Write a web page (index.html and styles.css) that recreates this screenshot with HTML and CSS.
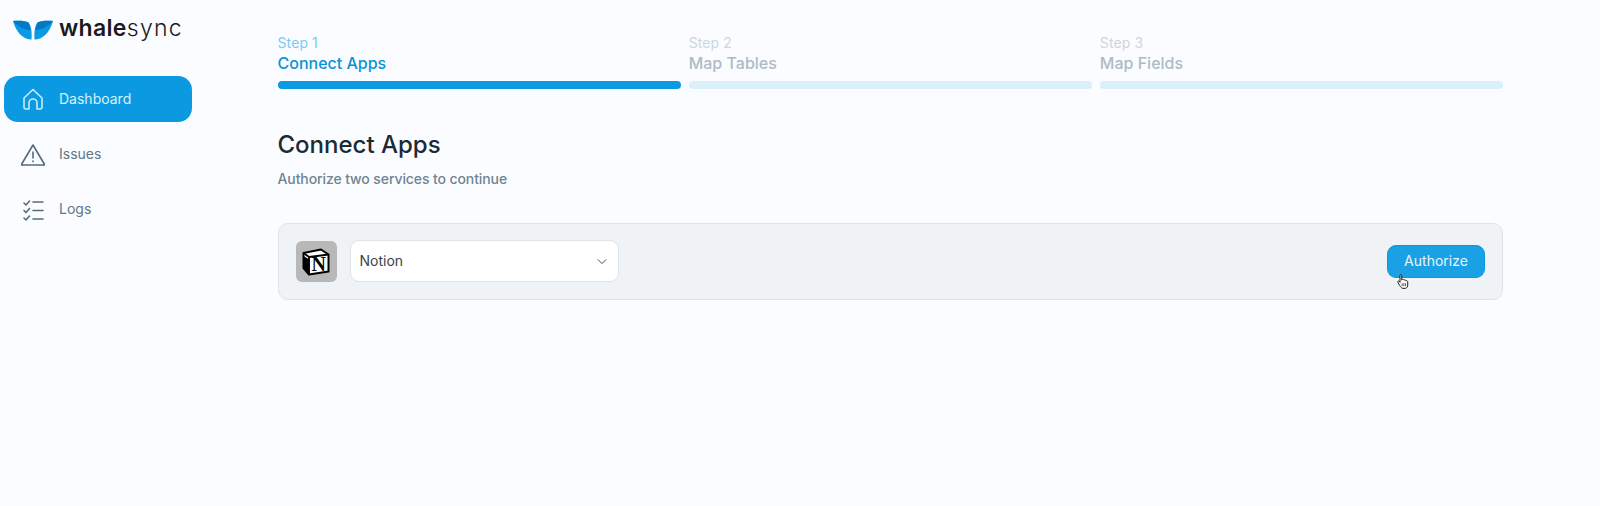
FILE: index.html
```html
<!DOCTYPE html>
<html lang="en">
<head>
<meta charset="utf-8">
<title>Whalesync</title>
<link rel="stylesheet" href="styles.css">
</head>
<body>
<div class="app">
  <aside class="sidebar">
    <div class="logo">
      <svg class="logo-mark" viewBox="0 0 40 20" width="40" height="20">
        <path d="M0 1 C5 0.5 12 0.5 15.5 2.5 C18.5 6 19 13 18.5 19.5 C10 19.5 3 12 0 1Z" fill="#0a9ae4"/>
        <path d="M0 1 C5 0.5 12 0.5 15.5 2.5 C16.5 5 17 7 17.5 10 C11 9.5 5 7 0 1Z" fill="#0578c4"/>
        <path d="M40 1 C35 0.5 28 0.5 24.5 2.5 C21.5 6 21 13 21.5 19.5 C30 19.5 37 12 40 1Z" fill="#0a9ae4"/>
        <path d="M40 1 C35 0.5 28 0.5 24.5 2.5 C23.5 5 23 7 22.5 10 C29 9.5 35 7 40 1Z" fill="#0578c4"/>
      </svg>
      <span class="logo-text"><b>whale</b>sync</span>
    </div>
    <nav class="nav">
      <a class="nav-item active">
        <svg class="nav-icon" viewBox="0 0 24 24" width="24" height="24"><path d="M3 11 L12 2.5 L21 11 V20 A2 2 0 0 1 19 22 H16 V16 A4 4 0 0 0 8 16 V22 H5 A2 2 0 0 1 3 20Z"/></svg>
        <span>Dashboard</span>
      </a>
      <a class="nav-item">
        <svg class="nav-icon" viewBox="0 0 24 24" width="24" height="24"><path d="M12 2 L23 20.5 A0.7 0.7 0 0 1 22.4 22 H1.6 A0.7 0.7 0 0 1 1 20.5Z"/><path d="M12 9 V15 M12 18 V18.6"/></svg>
        <span>Issues</span>
      </a>
      <a class="nav-item">
        <svg class="nav-icon" viewBox="0 0 24 24" width="24" height="24"><path d="M3 5 L5 7 L8.5 3 M3 12.5 L5 14.5 L8.5 10.5 M3 20 L5 22 L8.5 18 M12 4 H22 M12 12.5 H22 M12 21 H22"/></svg>
        <span>Logs</span>
      </a>
    </nav>
  </aside>
  <main class="main">
    <div class="steps">
      <div class="step current"><div class="step-num">Step 1</div><div class="step-name">Connect Apps</div><div class="step-bar"></div></div>
      <div class="step"><div class="step-num">Step 2</div><div class="step-name">Map Tables</div><div class="step-bar"></div></div>
      <div class="step"><div class="step-num">Step 3</div><div class="step-name">Map Fields</div><div class="step-bar"></div></div>
    </div>
    <h1 class="title">Connect Apps</h1>
    <p class="subtitle">Authorize two services to continue</p>
    <section class="card">
      <div class="app-icon">
        <svg viewBox="0 0 28 28" width="28" height="28">
          <path d="M1.5 5 L19 1.5 L26.5 6.5 V23.5 L7 26.5 L1.5 20Z" fill="#fff" stroke="#000" stroke-width="2" stroke-linejoin="round"/>
          <path d="M2 9 L7 12 V26 L2 20Z" fill="#000" stroke="#000" stroke-width="1.2" stroke-linejoin="round"/>
          <path d="M1.5 5 L7 9 L26.5 6.5 M7 9 V26.5" fill="none" stroke="#000" stroke-width="1.8" stroke-linejoin="round"/>
          <text x="16.8" y="23" class="notion-n">N</text>
        </svg>
      </div>
      <div class="select">
        <span>Notion</span>
        <svg viewBox="0 0 12 8" width="10" height="7" class="chevron"><path d="M1 1.5 L6 6.5 L11 1.5"/></svg>
      </div>
      <div class="spacer"></div>
      <div class="btn-wrap">
        <button class="btn">Authorize</button>
        <svg class="cursor" viewBox="0 0 14 18" width="12" height="17"><path d="M3.5 1.5 C4.5 0.5 5.5 1 5.5 2.5 V7 C6.5 6.3 7.5 6.5 8 7.3 C9 6.8 10 7 10.3 8 C11.3 7.7 12.5 8.2 12.5 9.5 V13 C12.5 15 11.5 16.5 10 17 H6.5 C5 16.5 4 15 3 13.5 L1 10 C0.5 9 1.5 8 2.5 8.8 L3.5 10Z" fill="#fff" stroke="#111" stroke-width="1.1" stroke-linejoin="round"/><path d="M6 11 V14.5 M8 11 V14.5 M10 11 V14.5" stroke="#111" stroke-width="0.8"/></svg>
      </div>
    </section>
  </main>
</div>
</body>
</html>
```
FILE: styles.css
```css
* { box-sizing: border-box; }
html, body { margin: 0; height: 100%; }
body {
  background: #fbfcff;
  font-family: "Inter", "Liberation Sans", sans-serif;
  overflow: hidden;
}
.app { display: flex; height: 506px; }
.sidebar { width: 277.5px; flex: none; padding: 19px 0 0 4px; }
.logo { display: flex; align-items: center; gap: 6px; padding-left: 9px; height: 22px; }
.logo-mark { flex: none; }
.logo-text {
  font-size: 23px;
  line-height: 22px;
  color: #1a1a1c;
  letter-spacing: 1.3px;
  font-weight: 300;
  margin-bottom: 4px;
}
.logo-text b { font-weight: 600; letter-spacing: 0.3px; }
.nav { display: flex; flex-direction: column; margin-top: 35px; width: 188px; gap: 10px; }
.nav-item {
  display: flex;
  align-items: center;
  gap: 14px;
  height: 45px;
  padding-left: 17px;
  border-radius: 14px;
  color: #5f7686;
  font-size: 14px;
}
.nav-item span { margin-bottom: 2px; }
.nav-item.active { height: 46px; background: #0b9ae2; color: #d6f1fd; }
.nav-icon { fill: none; stroke: #536d7d; stroke-width: 1.6; stroke-linecap: round; stroke-linejoin: round; flex: none; }
.active .nav-icon { stroke: #c8ecfb; }
.main { width: 1225.5px; padding-top: 34px; }
.steps { display: flex; gap: 8px; }
.step { flex: 1; min-width: 0; }
.step-num { font-size: 14px; line-height: 17px; color: #ccd6dc; letter-spacing: 0.1px; }
.step-name { font-size: 16px; line-height: 21px; font-weight: 500; color: #adbbc4; margin-top: 2px; }
.step-bar { height: 8px; border-radius: 4px; background: #dbeffa; margin-top: 7px; }
.step.current .step-num { color: #7ccaf1; }
.step.current .step-name { color: #0a92d6; }
.step.current .step-bar { background: #0b9ae2; }
.title { margin: 41px 0 0; font-size: 24px; line-height: 30px; font-weight: 500; color: #1c2a33; }
.subtitle { margin: 10px 0 0; font-size: 14px; line-height: 18px; font-weight: 500; color: #6f8491; letter-spacing: -0.1px; }
.card {
  display: flex;
  align-items: center;
  height: 77px;
  margin-top: 35px;
  padding: 0 17px;
  background: #eff3f5;
  border: 1px solid #dde3e8;
  border-radius: 10px;
}
.app-icon {
  width: 41px;
  height: 41px;
  flex: none;
  display: flex;
  align-items: center;
  justify-content: center;
  background: #b8b8b8;
  border-radius: 6px;
}
.notion-n { font-family: "Liberation Serif", serif; font-size: 20px; font-weight: 700; text-anchor: middle; fill: #000; }
.select {
  display: flex;
  align-items: center;
  justify-content: space-between;
  width: 269px;
  height: 42px;
  margin: 0 0 1px 13px;
  padding: 0 11px 0 9px;
  background: #fff;
  border: 1px solid #dfe4e8;
  border-radius: 9px;
  font-size: 14px;
  color: #3d4347;
}
.select span { margin-bottom: 2px; }
.chevron { fill: none; stroke: #4a5054; stroke-width: 1.2; }
.spacer { flex: 1; }
.btn-wrap { position: relative; }
.btn {
  display: block;
  width: 98px;
  height: 33px;
  border: 1px solid #0e97dc;
  border-radius: 9px;
  background: #1aa0e4;
  color: #e6f6fe;
  font-family: "Inter", "Liberation Sans", sans-serif;
  font-size: 14px;
  padding: 0 0 2px;
}
.cursor { position: absolute; left: 10px; top: 28px; }
```
